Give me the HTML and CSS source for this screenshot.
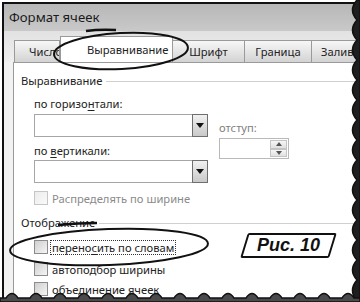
FILE: index.html
```html
<!DOCTYPE html>
<html lang="ru">

<head>
    <meta charset="UTF-8">
    <title>Формат ячеек</title>
    <link rel="stylesheet" href="styles.css">
</head>

<body>
    <div class="page">
        <div class="win">
            <div class="title">Формат ячеек</div>
            <div class="tabs">
                <div class="tab tab-first">Число</div>
                <div class="tab tab-active">Выравнивание</div>
                <div class="tab tab-font">Шрифт</div>
                <div class="tab tab-border">Граница</div>
                <div class="tab tab-fill">Заливка</div>
            </div>
            <div class="panel">
                <div class="group"><span>Выравнивание</span><i class="rule"></i></div>
                <div class="align">
                    <div class="col-left">
                        <div class="lbl">по горизо<u>н</u>тали:</div>
                        <div class="select"><span class="drop"><i class="tri"></i></span></div>
                        <div class="lbl lbl-second">по <u>в</u>ертикали:</div>
                        <div class="select"><span class="drop"><i class="tri"></i></span></div>
                    </div>
                    <div class="col-right">
                        <div class="lbl muted">отступ:</div>
                        <div class="spin">
                            <span class="spin-btns">
                                <span class="spin-btn"><i class="up"></i></span>
                                <span class="spin-btn"><i class="down"></i></span>
                            </span>
                        </div>
                    </div>
                </div>
                <div class="check check-first disabled"><span class="box"></span><span>Распределять по ширине</span></div>
                <div class="group group-second"><span>Отображение</span><i class="rule"></i></div>
                <div class="check check-wrap"><span class="box"></span><span class="focus">перено<u>с</u>ить по словам</span></div>
                <div class="check check-fit"><span class="box"></span><span>автоподбор ширины</span></div>
                <div class="check check-merge"><span class="box"></span><span>о<u>б</u>ъединение ячеек</span></div>
            </div>
        </div>

        <!-- pen marks and torn edges of the scan -->
        <svg class="marks" width="360" height="302" viewBox="0 0 360 302">
            <g fill="none" stroke="#111" stroke-width="2">
                <ellipse cx="121" cy="51" rx="67" ry="18" transform="rotate(-3 121 51)" />
                <path d="M86 31 Q100 29 116 30" stroke-width="2.5" />
                <ellipse cx="109" cy="247" rx="99" ry="18" transform="rotate(-2 109 247)" />
                <path d="M58 225 Q78 223 97 223" stroke-width="2.5" />
            </g>
            <path class="edge" d="M360 0 L357 0 Q348 10 357 20 Q348 30 357 40 Q348 50 357 60 Q348 70 357 80 Q348 90 357 100 Q348 110 357 120 Q348 130 357 140 Q348 150 357 160 Q348 170 357 180 Q348 190 357 200 Q348 210 357 220 Q348 230 357 240 Q348 250 357 260 Q348 270 357 280 Q348 290 357 302 L360 302 Z" />
            <path class="edge edge-bottom" d="M0 302 L0 298 L6 298 Q12 289 18 298 L30 298 Q36 289 42 298 L54 298 Q60 289 66 298 L78 298 Q84 289 90 298 L102 298 Q108 289 114 298 L126 298 Q132 289 138 298 L150 298 Q156 289 162 298 L174 298 Q180 289 186 298 L198 298 Q204 289 210 298 L222 298 Q228 289 234 298 L246 298 Q252 289 258 298 L270 298 Q276 289 282 298 L294 298 Q300 289 306 298 L318 298 Q324 289 330 298 L342 298 Q348 289 354 298 L360 298 L360 302 Z" />
        </svg>

        <div class="fig">Рис. 10</div>
    </div>
</body>

</html>
```

FILE: styles.css
```css
* {
    margin: 0;
    padding: 0;
    box-sizing: border-box;
}

body {
    width: 360px;
    height: 302px;
    overflow: hidden;
    background: #fff;
    font-family: "Noto Sans", sans-serif;
    font-size: 11.2px;
    color: #222;
}

u {
    text-decoration-thickness: 1px;
    text-underline-offset: 2px;
}

.page {
    position: relative;
    width: 360px;
    height: 302px;
    overflow: hidden;
    padding: 2px 0 0 2px;
}

.win {
    height: 100%;
    border-top: 2px solid #111;
    border-left: 2px solid #111;
    background: #f2f2f2;
}

.title {
    height: 27px;
    padding-left: 5px;
    font-size: 13.2px;
    line-height: 27px;
    color: #1a1a1a;
    background: linear-gradient(#b7b7b7, #c9c9c9);
}

.tabs {
    display: flex;
    align-items: flex-end;
    height: 31px;
    padding-left: 10px;
    overflow: hidden;
    background: linear-gradient(#e2e2e2, #efefef);
}

.tab {
    flex-shrink: 0;
    height: 22px;
    line-height: 21px;
    border: 1px solid #9a9a9a;
    border-bottom: none;
    border-left: none;
    background: linear-gradient(#f7f7f7, #d3d3d3);
    white-space: nowrap;
    overflow: hidden;
    text-align: center;
}

.tab-first {
    width: 46px;
    padding-left: 14px;
    text-align: left;
    border-left: 1px solid #9a9a9a;
}

.tab-active {
    width: 113px;
    height: 26px;
    line-height: 25px;
    padding-left: 26px;
    text-align: left;
    background: #fff;
    border-left: 1px solid #9a9a9a;
}

.tab-font {
    width: 72px;
}

.tab-border {
    width: 67px;
}

.tab-fill {
    width: 70px;
    padding-left: 9px;
    text-align: left;
}

.panel {
    height: 240px;
    margin-left: 9px;
    padding: 10px 0 0 7px;
    border-left: 1px solid #9a9a9a;
    border-top: 1px solid #9a9a9a;
    background: #fff;
}

.group {
    display: flex;
    align-items: center;
    gap: 4px;
    height: 16px;
    line-height: 16px;
}

.group-second {
    margin-top: 9px;
}

.rule {
    flex: 1;
    height: 1px;
    background: #cfcfcf;
}

.align {
    display: flex;
    margin: 7px 0 0 13px;
}

.col-left {
    width: 174px;
}

.lbl {
    height: 16px;
    line-height: 16px;
}

.lbl-second {
    margin-top: 6px;
}

.muted {
    color: #808080;
}

.select {
    display: flex;
    justify-content: flex-end;
    height: 23px;
    margin-top: 2px;
    border: 1px solid #a6a6a6;
    background: #fff;
}

.lbl-second + .select {
    margin-top: 1px;
}

.drop {
    display: flex;
    align-items: center;
    justify-content: center;
    width: 16px;
    margin: -1px -1px -1px 0;
    border: 1px solid #6f6f6f;
    background: linear-gradient(#f1f1f1, #c9c9c9);
}

.tri {
    border-left: 4px solid transparent;
    border-right: 4px solid transparent;
    border-top: 5px solid #111;
}

.col-right {
    margin-left: 11px;
    padding-top: 24px;
}

.spin {
    display: flex;
    justify-content: flex-end;
    width: 70px;
    height: 21px;
    margin-top: 2px;
    border: 1px solid #b9b9b9;
}

.spin-btns {
    display: flex;
    flex-direction: column;
    width: 19px;
    padding: 1px;
}

.spin-btn {
    flex: 1;
    display: flex;
    align-items: center;
    justify-content: center;
    border: 1px solid #c4c4c4;
    background: linear-gradient(#f6f6f6, #e0e0e0);
}

.up {
    border-left: 3px solid transparent;
    border-right: 3px solid transparent;
    border-bottom: 4px solid #555;
}

.down {
    border-left: 3px solid transparent;
    border-right: 3px solid transparent;
    border-top: 4px solid #555;
}

.check {
    display: flex;
    align-items: center;
    gap: 4px;
    height: 16px;
    margin-left: 13px;
}

.check-first {
    margin-top: 7px;
}

.check-wrap {
    margin-top: 8px;
}

.check-fit {
    margin-top: 6px;
}

.check-merge {
    margin-top: 4px;
}

.box {
    width: 14px;
    height: 14px;
    border: 1px solid #8c8c8c;
    background: linear-gradient(135deg, #cfcfcf, #f5f5f5);
}

.disabled {
    color: #8a8a8a;
}

.disabled .box {
    border-color: #c6c6c6;
    background: linear-gradient(135deg, #ececec, #fafafa);
}

.focus {
    margin-left: -2px;
    padding: 0 1px;
    line-height: 13px;
    border: 1px dotted #333;
}

.marks {
    position: absolute;
    top: 0;
    left: 0;
    pointer-events: none;
}

.edge {
    fill: #1e1e1e;
    stroke: #111;
    stroke-width: 1.5;
}

.edge-bottom {
    fill: #4a4a4a;
}

.fig {
    position: absolute;
    left: 244px;
    top: 233px;
    width: 89px;
    height: 25px;
    font-family: "Liberation Sans", Arial, sans-serif;
    font-size: 18px;
    font-weight: bold;
    font-style: italic;
    line-height: 24px;
    text-align: center;
    color: #111;
}

.fig::before {
    content: '';
    position: absolute;
    inset: 0;
    border: 2px solid #111;
    border-radius: 2px;
    transform: skewX(-17deg);
}
```
